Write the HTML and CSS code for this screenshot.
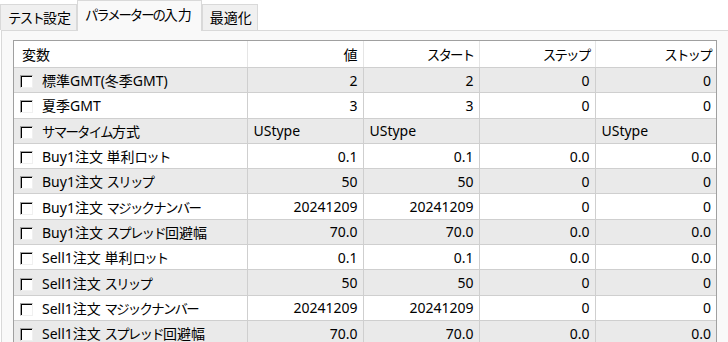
FILE: index.html
```html
<!DOCTYPE html>
<html lang="ja">
<head>
  <meta charset="UTF-8">
  <title>パラメーターの入力</title>
  <link rel="stylesheet" href="styles.css">
</head>
<body>

<div class="tabs">
  <div class="tab"><span class="k">テスト</span>設定</div>
  <div class="tab active"><span class="k">パラメーターの</span>入力</div>
  <div class="tab">最適化</div>
</div>

<div class="panel">
  <div class="list">
    <table>
      <colgroup>
        <col class="c-name">
        <col class="c-num">
        <col class="c-num">
        <col class="c-num">
        <col>
      </colgroup>
      <thead>
        <tr>
          <th class="left">変数</th>
          <th>値</th>
          <th><span class="k">スタート</span></th>
          <th><span class="k">ステップ</span></th>
          <th><span class="k">ストップ</span></th>
        </tr>
      </thead>
      <tbody>
        <tr class="odd">
          <td class="name"><span class="check"></span>標準GMT(冬季GMT)</td>
          <td>2</td><td>2</td><td>0</td><td>0</td>
        </tr>
        <tr>
          <td class="name"><span class="check"></span>夏季GMT</td>
          <td>3</td><td>3</td><td>0</td><td>0</td>
        </tr>
        <tr class="odd">
          <td class="name"><span class="check"></span><span class="k">サマータイム</span>方式</td>
          <td class="left">UStype</td><td class="left">UStype</td><td></td><td class="left">UStype</td>
        </tr>
        <tr>
          <td class="name"><span class="check"></span>Buy1注文 単利<span class="k">ロット</span></td>
          <td>0.1</td><td>0.1</td><td>0.0</td><td>0.0</td>
        </tr>
        <tr class="odd">
          <td class="name"><span class="check"></span>Buy1注文 <span class="k">スリップ</span></td>
          <td>50</td><td>50</td><td>0</td><td>0</td>
        </tr>
        <tr>
          <td class="name"><span class="check"></span>Buy1注文 <span class="k">マジックナンバー</span></td>
          <td>20241209</td><td>20241209</td><td>0</td><td>0</td>
        </tr>
        <tr class="odd">
          <td class="name"><span class="check"></span>Buy1注文 <span class="k">スプレッド</span>回避幅</td>
          <td>70.0</td><td>70.0</td><td>0.0</td><td>0.0</td>
        </tr>
        <tr>
          <td class="name"><span class="check"></span>Sell1注文 単利<span class="k">ロット</span></td>
          <td>0.1</td><td>0.1</td><td>0.0</td><td>0.0</td>
        </tr>
        <tr class="odd">
          <td class="name"><span class="check"></span>Sell1注文 <span class="k">スリップ</span></td>
          <td>50</td><td>50</td><td>0</td><td>0</td>
        </tr>
        <tr>
          <td class="name"><span class="check"></span>Sell1注文 <span class="k">マジックナンバー</span></td>
          <td>20241209</td><td>20241209</td><td>0</td><td>0</td>
        </tr>
        <tr class="odd">
          <td class="name"><span class="check"></span>Sell1注文 <span class="k">スプレッド</span>回避幅</td>
          <td>70.0</td><td>70.0</td><td>0.0</td><td>0.0</td>
        </tr>
      </tbody>
    </table>
  </div>
</div>

</body>
</html>
```

FILE: styles.css
```css
body {
  margin: 0;
  background-color: #fff;
  color: #000;
  font-family: "Noto Sans", "Noto Sans CJK JP", sans-serif;
  font-size: 14px;
  overflow: hidden;
}

/* kana are smaller and narrower in the original UI font */
.k {
  font-size: 13.4px;
  letter-spacing: -1.7px;
}

.tabs {
  display: flex;
  align-items: flex-end;
  height: 30px;
  position: relative;
  z-index: 1;
}

.tab {
  height: 26px;
  line-height: 25px;
  padding: 0 5px 0 7px;
  background-color: #f0f0f0;
  border: 1px solid #d9d9d9;
  border-bottom: none;
  box-sizing: border-box;
}

.tab.active {
  height: 31px;
  line-height: 28px;
  padding: 0 9px 0 7px;
  background-color: #f9f9f9;
  margin-bottom: -1px;
}

.tab.active .k {
  letter-spacing: -2.1px;
}

.panel {
  background-color: #f9f9f9;
  border-left: 1px solid #d9d9d9;
  border-top: 1px solid #d9d9d9;
  margin-left: 1px;
  padding: 9px 0 0 11px;
  height: 320px;
}

.list {
  width: 704px;
  border: 1px solid #a0a0a0;
  border-bottom: none;
  background-color: #fff;
  box-sizing: border-box;
}

table {
  width: 100%;
  border-collapse: collapse;
  table-layout: fixed;
}

.c-name {
  width: 233px;
}

.c-num {
  width: 116px;
}

th {
  height: 26px;
  font-weight: normal;
  text-align: right;
  padding: 0 5px 0 8px;
  border-left: 1px solid #e5e5e5;
  border-bottom: 1px solid #cfcfcf;
  white-space: nowrap;
}

th:first-child {
  border-left: none;
}

th.left {
  text-align: left;
}

td {
  height: 24.3px;
  padding: 0 5px 0 6px;
  text-align: right;
  border-left: 1px solid #cfcfcf;
  border-bottom: 1px solid #cfcfcf;
  white-space: nowrap;
}

td:first-child {
  border-left: none;
}

td.left {
  text-align: left;
}

td.name {
  text-align: left;
  padding-left: 6px;
}

tr.odd td {
  background-color: #eaeaea;
}

.check {
  display: inline-block;
  width: 13px;
  height: 13px;
  box-sizing: border-box;
  vertical-align: -2px;
  margin-right: 9px;
  background-color: #fff;
  border-top: 1px solid #a0a0a0;
  border-left: 1px solid #a0a0a0;
  border-right: 1px solid #f0f0f0;
  border-bottom: 1px solid #f0f0f0;
  box-shadow: inset 1px 1px 0 #000;
}
```
